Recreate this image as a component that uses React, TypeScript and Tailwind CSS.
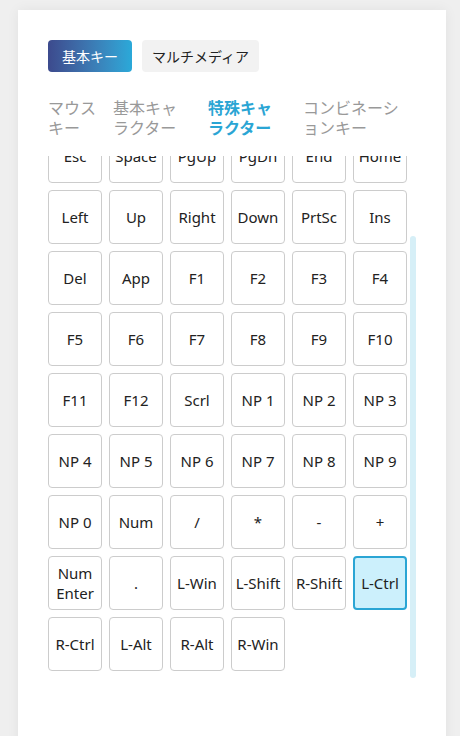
import { useLayoutEffect, useRef, useState } from "react"

const rows = [
  ["Tab", "Enter", "BkSp", "Caps", "Shift", "Ctrl"],
  ["Esc", "Space", "PgUp", "PgDn", "End", "Home"],
  ["Left", "Up", "Right", "Down", "PrtSc", "Ins"],
  ["Del", "App", "F1", "F2", "F3", "F4"],
  ["F5", "F6", "F7", "F8", "F9", "F10"],
  ["F11", "F12", "Scrl", "NP 1", "NP 2", "NP 3"],
  ["NP 4", "NP 5", "NP 6", "NP 7", "NP 8", "NP 9"],
  ["NP 0", "Num", "/", "*", "-", "+"],
  ["Num Enter", ".", "L-Win", "L-Shift", "R-Shift", "L-Ctrl"],
  ["R-Ctrl", "L-Alt", "R-Alt", "R-Win"],
]

const tabs = [
  { label: "マウスキー", cls: "w-[50px] mr-[15px]" },
  { label: "基本キャラクター", cls: "w-[78px] mr-[17px]" },
  { label: "特殊キャラクター", cls: "w-[78px] mr-[17px]" },
  { label: "コンビネーションキー", cls: "w-[100px]" },
]

const THUMB = 442

export default function App() {
  const [selected, setSelected] = useState("L-Ctrl")
  const [tab, setTab] = useState(2)
  const [thumbTop, setThumbTop] = useState(79)
  const scrollRef = useRef<HTMLDivElement>(null)

  const sync = () => {
    const el = scrollRef.current
    if (!el) return
    const max = el.scrollHeight - el.clientHeight
    const ratio = max > 0 ? el.scrollTop / max : 0
    setThumbTop(Math.round(ratio * (el.clientHeight - THUMB - 3)))
  }

  useLayoutEffect(() => {
    const el = scrollRef.current
    if (el) el.scrollTop = el.scrollHeight
    sync()
  }, [])

  return (
    <div
      className="min-h-screen bg-[#efefef] pl-[18px] pr-[14px] pt-[10px] overflow-hidden"
      style={{ fontFamily: '"Noto Sans", "Noto Sans CJK JP", sans-serif' }}
    >
      <div className="bg-white min-h-[760px] px-[30px] pt-[30px] shadow-[0_0_12px_rgba(0,0,0,0.06)]">
        <div className="flex gap-[10px]">
          <button className="h-8 px-[14px] rounded-[4px] text-[14px] text-white bg-gradient-to-r from-[#3c4a8d] to-[#2aa9d9]">
            基本キー
          </button>
          <button className="h-8 px-[10px] rounded-[4px] text-[14px] text-[#222] bg-[#f2f2f2]">
            マルチメディア
          </button>
        </div>

        <div className="flex mt-[26px]">
          {tabs.map((t, i) => (
            <div
              key={t.label}
              onClick={() => setTab(i)}
              className={`${t.cls} text-[16px] leading-[20px] cursor-pointer ${
                tab === i ? "text-[#2aa5d4] font-bold" : "text-[#999]"
              }`}
            >
              {t.label}
            </div>
          ))}
        </div>

        <div className="relative mt-[18px] w-[368px]">
          <div
            ref={scrollRef}
            onScroll={sync}
            className="h-[525px] overflow-y-auto [scrollbar-width:none] [&::-webkit-scrollbar]:hidden"
          >
            <div className="grid grid-cols-[repeat(6,54px)] gap-[7px] py-[10px]">
              {rows.flat().map((k) => (
                <button
                  key={k}
                  onClick={() => setSelected(k)}
                  className={`w-[54px] h-[54px] rounded-[4px] flex items-center justify-center text-center text-[15px] leading-[20px] text-[#222] px-[1px] ${
                    selected === k
                      ? "border-2 border-[#2aa5d4] bg-[#ccf0fc]"
                      : "border border-[#cccccc] bg-white"
                  }`}
                >
                  {k}
                </button>
              ))}
            </div>
          </div>
          <div
            className="absolute right-0 w-[6px] rounded-full bg-[#d6eff7]"
            style={{ top: thumbTop, height: THUMB }}
          />
        </div>
      </div>
    </div>
  )
}
